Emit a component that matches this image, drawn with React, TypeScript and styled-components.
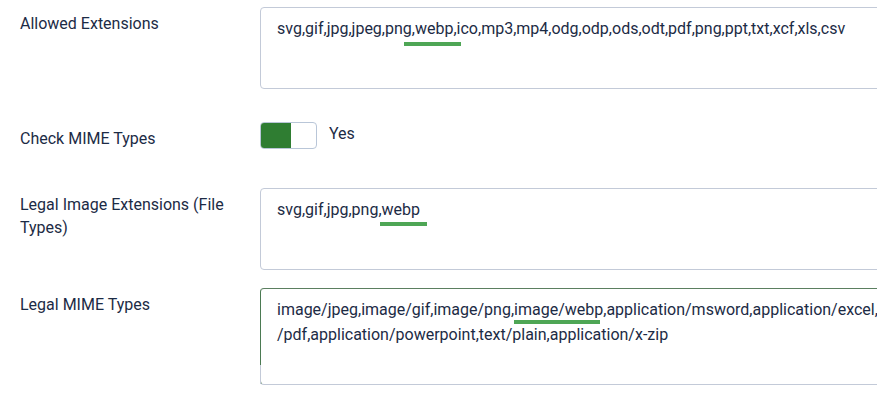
import styled, {createGlobalStyle} from 'styled-components';

const GlobalStyle = createGlobalStyle`
  html, body {
    margin: 0;
    padding: 0;
    background: #fff;
    overflow: hidden;
  }

  body {
    font-family: Roboto, "Liberation Sans", Arial, sans-serif;
    color: #1c2b45;
  }
`;

const Form = styled.div`
  display: flex;
  flex-direction: column;
  gap: 18px;
  padding: 7px 0 0 20px;
  width: 1100px;
`;

const Row = styled.div<{ $pad?: boolean }>`
  display: grid;
  grid-template-columns: 220px 1fr;
  column-gap: 20px;
  align-items: start;
  padding: ${({$pad}) => $pad ? '15px 0 20px' : '0'};
`;

const Label = styled.label`
  font-size: 16px;
  line-height: 23px;
  padding-top: 5px;
  color: #1c2b45;
`;

const TextBox = styled.div<{ $height: number; $focused?: boolean }>`
  position: relative;
  box-sizing: border-box;
  height: ${({$height}) => $height}px;
  padding: 8px 16px;
  border: 1px solid #c3cad8;
  border-radius: 4px;
  background: #fff;
  font-size: 16px;
  line-height: 25px;
  color: #1c2b45;
  white-space: pre;
  ${({$focused}) => $focused && `
    border-top-color: #5b7f60;
    border-left-color: #4b7a52;

    &::after {
      content: '';
      position: absolute;
      left: -1px;
      bottom: 0;
      width: 1px;
      height: 19px;
      background: #c3cad8;
    }
  `}
`;

const Mark = styled.span<{ $left: number; $right: number; $drop: number }>`
  position: relative;

  &::after {
    content: '';
    position: absolute;
    left: ${({$left}) => $left}px;
    right: ${({$right}) => $right}px;
    top: calc(100% + ${({$drop}) => $drop}px);
    height: 4px;
    background: #4ea655;
  }
`;

const SwitchWrap = styled.div`
  display: flex;
  align-items: center;
  gap: 12px;
`;

const Switch = styled.span`
  display: flex;
  box-sizing: border-box;
  width: 57px;
  height: 27px;
  border: 1px solid #b9c6d8;
  border-radius: 4px;
  background: #fff;
  overflow: hidden;
`;

const SwitchOn = styled.span`
  width: 30px;
  height: 100%;
  background: #2f7d32;
`;

const SwitchText = styled.span`
  font-size: 16px;
  line-height: 24px;
  margin-top: -3px;
`;

export default function App() {
  return (
    <>
      <GlobalStyle/>
      <Form>
        <Row>
          <Label>Allowed Extensions</Label>
          <TextBox $height={82}>
            svg,gif,jpg,jpeg,png,<Mark $left={-11} $right={-8} $drop={4}>webp</Mark>,ico,mp3,mp4,odg,odp,ods,odt,pdf,png,ppt,txt,xcf,xls,csv
          </TextBox>
        </Row>
        <Row $pad>
          <Label>Check MIME Types</Label>
          <SwitchWrap>
            <Switch><SwitchOn/></Switch>
            <SwitchText>Yes</SwitchText>
          </SwitchWrap>
        </Row>
        <Row>
          <Label>Legal Image Extensions (File Types)</Label>
          <TextBox $height={82}>
            svg,gif,jpg,png,<Mark $left={-2} $right={-7} $drop={3}>webp</Mark>
          </TextBox>
        </Row>
        <Row>
          <Label>Legal MIME Types</Label>
          <TextBox $height={97} $focused>
            image/jpeg,image/gif,image/png,<Mark $left={0} $right={3} $drop={1}>image/webp</Mark>,application/msword,application/excel,application{'\n'}/pdf,application/powerpoint,text/plain,application/x-zip
          </TextBox>
        </Row>
      </Form>
    </>
  );
}
